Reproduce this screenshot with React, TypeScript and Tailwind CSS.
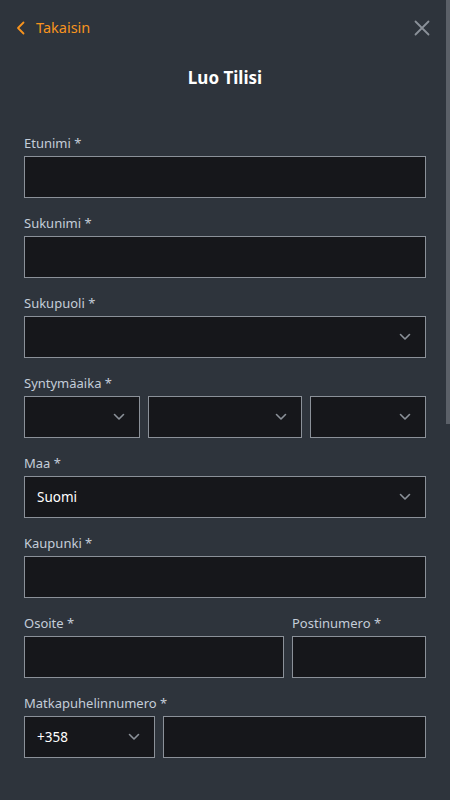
import { ReactNode } from "react";

function Chevron() {
  return (
    <svg width="12" height="8" viewBox="0 0 12 8" fill="none" className="shrink-0">
      <path d="M1.5 1.5 L6 6 L10.5 1.5" stroke="#8b9199" strokeWidth="1.6" strokeLinecap="round" strokeLinejoin="round" />
    </svg>
  );
}

function Field({ label, children }: { label: string; children: ReactNode }) {
  return (
    <div className="flex flex-col">
      <label className="text-[13px] leading-[18px] text-[#c4cdd9] mb-1">{label}</label>
      {children}
    </div>
  );
}

function Input() {
  return <input className="h-[42px] w-full border border-[#8b9199] bg-[#16171b] px-3 text-[14px] text-white outline-none" />;
}

function Select({ value }: { value?: string }) {
  return (
    <div className="h-[42px] w-full border border-[#8b9199] bg-[#16171b] flex items-center justify-between pl-3 pr-[14px]">
      <span className="text-[13.5px] text-white">{value}</span>
      <Chevron />
    </div>
  );
}

export default function App() {
  return (
    <div className="relative h-screen w-[450px] bg-[#2e343c] font-['Noto_Sans',sans-serif] overflow-hidden">
      <div className="h-[56px] flex items-center justify-between pl-4 pr-5">
        <a className="flex items-center gap-[11px] text-[#f7931e] text-[14.5px]" href="#">
          <svg width="9" height="14" viewBox="0 0 9 14" fill="none">
            <path d="M7.5 1.5 L2 7 L7.5 12.5" stroke="#f7931e" strokeWidth="1.8" strokeLinecap="round" strokeLinejoin="round" />
          </svg>
          Takaisin
        </a>
        <svg width="16" height="16" viewBox="0 0 16 16" fill="none">
          <path d="M1.5 1.5 L14.5 14.5 M14.5 1.5 L1.5 14.5" stroke="#8b9199" strokeWidth="1.8" strokeLinecap="round" />
        </svg>
      </div>

      <h1 className="mt-[10px] text-center text-white font-bold text-[17px] leading-[24px]">Luo Tilisi</h1>

      <div className="mt-[44px] px-6 flex flex-col gap-4">
        <Field label="Etunimi *"><Input /></Field>
        <Field label="Sukunimi *"><Input /></Field>
        <Field label="Sukupuoli *"><Select /></Field>
        <Field label="Syntymäaika *">
          <div className="grid grid-cols-[3fr_4fr_3fr] gap-2">
            <Select />
            <Select />
            <Select />
          </div>
        </Field>
        <Field label="Maa *"><Select value="Suomi" /></Field>
        <Field label="Kaupunki *"><Input /></Field>
        <div className="grid grid-cols-[260px_1fr] gap-2">
          <Field label="Osoite *"><Input /></Field>
          <Field label="Postinumero *"><Input /></Field>
        </div>
        <Field label="Matkapuhelinnumero *">
          <div className="grid grid-cols-[131px_1fr] gap-2">
            <Select value="+358" />
            <Input />
          </div>
        </Field>
      </div>

      <div className="absolute top-0 right-0 w-[4px] h-[424px] bg-[#5b6068]" />
    </div>
  );
}
